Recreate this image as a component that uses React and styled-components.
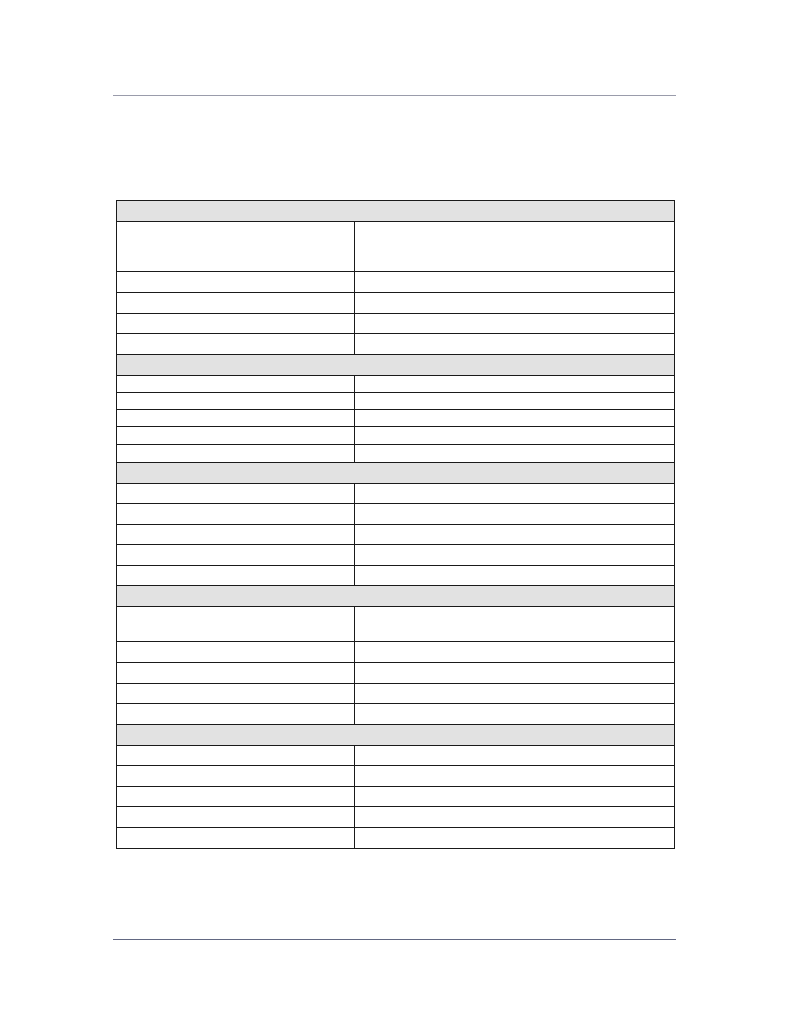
import React from 'react'
import styled, { createGlobalStyle } from 'styled-components'

const GlobalStyle = createGlobalStyle`
  html, body {
    margin: 0;
    padding: 0;
    background: #fff;
    font-family: "Liberation Sans", Arial, sans-serif;
  }
`

const Page = styled.div`
  width: 790px;
  height: 1022px;
  padding: 95px 0 0 113px;
  box-sizing: border-box;
  display: flex;
  flex-direction: column;
`

const Rule = styled.div`
  width: 563px;
  height: 1px;
  background: ${props => props.$color || '#9a9cab'};
  margin-top: ${props => props.$gap || 0}px;
`

const Table = styled.div`
  width: 557px;
  margin: 104px 0 0 3px;
  border: 1px solid #1a1a1a;
  border-bottom: none;
  display: flex;
  flex-direction: column;
`

const Row = styled.div`
  display: grid;
  grid-template-columns: 238px 1fr;
  height: ${props => props.$h}px;
  box-sizing: border-box;
  border-bottom: 1px solid #1a1a1a;
`

const Cell = styled.div`
  border-right: ${props => props.$first ? '1px solid #1a1a1a' : 'none'};
`

const SectionHead = styled.div`
  height: ${props => props.$h}px;
  box-sizing: border-box;
  background: #e2e2e2;
  border-bottom: 1px solid #1a1a1a;
`

// line positions measured off the page, turned into row heights
const sections = [
  { head: 21, rows: [50, 21, 21, 20, 21] },
  { head: 21, rows: [17, 17, 17, 18, 18] },
  { head: 21, rows: [20, 21, 20, 21, 20] },
  { head: 21, rows: [35, 21, 21, 20, 21] },
  { head: 21, rows: [20, 21, 20, 21, 21] }
]

const App = () => (
  <>
    <GlobalStyle />
    <Page>
      <Rule />
      <Table>
        {sections.map((section, i) => (
          <React.Fragment key={i}>
            <SectionHead $h={section.head} />
            {section.rows.map((h, j) => (
              <Row key={j} $h={h}>
                <Cell $first />
                <Cell />
              </Row>
            ))}
          </React.Fragment>
        ))}
      </Table>
      <Rule $gap={90} $color="#626882" />
    </Page>
  </>
)

export default App
